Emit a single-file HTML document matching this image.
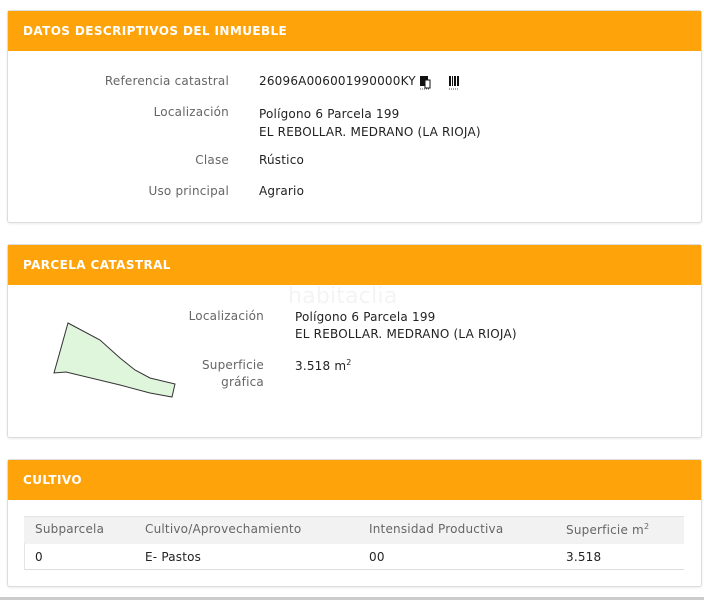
<!DOCTYPE html>
<html><head><meta charset="utf-8"><style>
body{margin:0;width:704px;height:600px;background:#fff;font-family:"DejaVu Sans","Liberation Sans",sans-serif;font-size:12px;color:#222;position:relative;overflow:hidden;letter-spacing:.2px}
.p{position:absolute;left:7px;width:693px;border:1px solid #ddd;border-radius:3px;background:#fff;box-shadow:0 1px 2px rgba(0,0,0,.08)}
.h{background:#ffa30a;height:40px;color:#fff;font-weight:bold;font-size:12px;line-height:40px;padding-left:15px;letter-spacing:.4px}
.t{position:absolute;white-space:nowrap}
.l{color:#666;text-align:right}
</style></head><body>
<div class="p" style="top:10px;height:211px"><div class="h">DATOS DESCRIPTIVOS DEL INMUEBLE</div></div>
<div class="t l" style="right:475px;top:74px">Referencia catastral</div>
<div class="t" style="left:259px;top:74px">26096A006001990000KY</div>
<svg class="t" style="left:418px;top:75px" width="48" height="16"><rect x="2" y="1" width="8" height="10" fill="#111"/><path d="M7 5h5v8H7z" fill="#fff" stroke="#111"/><path d="M2 14h10" stroke="#555" stroke-dasharray="1 1"/><g fill="#111"><rect x="31" y="1" width="2" height="10"/><rect x="34" y="1" width="1" height="10"/><rect x="36" y="1" width="2" height="10"/><rect x="39" y="1" width="2" height="10"/></g><path d="M31 14h10" stroke="#555" stroke-dasharray="1 1"/></svg>
<div class="t l" style="right:475px;top:105px">Localización</div>
<div class="t" style="left:259px;top:105px;line-height:18px">Polígono 6 Parcela 199<br>EL REBOLLAR. MEDRANO (LA RIOJA)</div>
<div class="t l" style="right:475px;top:153px">Clase</div>
<div class="t" style="left:259px;top:153px">Rústico</div>
<div class="t l" style="right:475px;top:184px">Uso principal</div>
<div class="t" style="left:259px;top:184px">Agrario</div>

<div class="p" style="top:244px;height:192px"><div class="h">PARCELA CATASTRAL</div></div>
<div class="t" style="left:288px;top:284px;font-size:22px;color:#f4f4f4">habitaclia</div>
<svg class="t" style="left:0;top:300px" width="200" height="110"><polygon points="68,23 100,40 120,58 135,70 150,78 175,84 172,97 150,93 120,85 66,72 54,73" fill="#dff5dc" stroke="#333" stroke-width="1"/></svg>
<div class="t l" style="right:440px;top:309px">Localización</div>
<div class="t" style="left:295px;top:309px;line-height:17px">Polígono 6 Parcela 199<br>EL REBOLLAR. MEDRANO (LA RIOJA)</div>
<div class="t l" style="right:440px;top:357px;line-height:17px">Superficie<br>gráfica</div>
<div class="t" style="left:295px;top:358px">3.518 m<sup style="font-size:8px">2</sup></div>

<div class="p" style="top:459px;height:126px"><div class="h">CULTIVO</div></div>
<div class="t" style="left:24px;top:516px;width:660px;height:27px;background:#f2f2f2;border-top:1px solid #e4e4e4"></div>
<div class="t" style="left:24px;top:569px;width:660px;height:1px;background:#ddd"></div>
<div class="t" style="left:24px;top:543px;width:1px;height:27px;background:#e4e4e4"></div>
<div class="t" style="left:35px;top:522px;color:#666">Subparcela</div>
<div class="t" style="left:145px;top:522px;color:#666">Cultivo/Aprovechamiento</div>
<div class="t" style="left:369px;top:522px;color:#666">Intensidad Productiva</div>
<div class="t" style="left:566px;top:522px;color:#666">Superficie m<sup style="font-size:8px">2</sup></div>
<div class="t" style="left:35px;top:550px">0</div>
<div class="t" style="left:145px;top:550px">E- Pastos</div>
<div class="t" style="left:369px;top:550px">00</div>
<div class="t" style="left:566px;top:550px">3.518</div>
<div class="t" style="left:0;top:597px;width:704px;height:3px;background:#ccc"></div>
</body></html>
